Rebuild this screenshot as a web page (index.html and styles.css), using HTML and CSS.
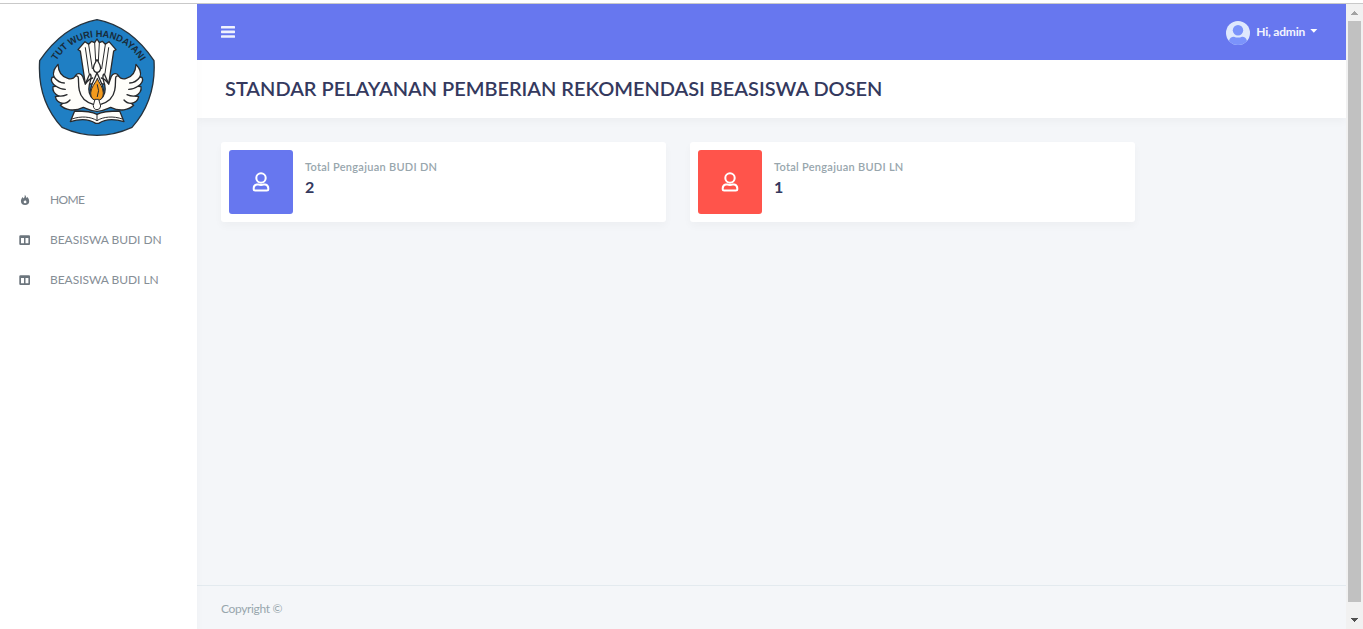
FILE: index.html
```html
<!DOCTYPE html>
<html lang="id">
<head>
<meta charset="utf-8">
<title>Dashboard</title>
<link rel="stylesheet" href="styles.css">
</head>
<body>
<div class="app">
  <aside class="sidebar">
    <svg class="logo" viewBox="0 0 402 402" role="img" aria-label="Tut Wuri Handayani">
      <path d="M201 29Q302 48 372 152Q379 270 306 352Q201 400 96 352Q21 270 29 152Q100 48 201 29Z" fill="#1f7fc4" stroke="#26323c" stroke-width="4"/>
      <defs><path id="motto" d="M79 152A147 147 0 0 1 334 158"/></defs>
      <text class="motto"><textPath href="#motto" textLength="304" lengthAdjust="spacingAndGlyphs">TUT WURI HANDAYANI</textPath></text>
      <g fill="#fffefa" stroke="#292a2c" stroke-width="4" stroke-linejoin="round" stroke-linecap="round">
        <path d="M166 222L151 123L144 119L165 95L176 103L185 94L194 98L201 87L208 98L217 94L226 103L237 95L258 119L251 123L236 222Z"/>
        <path d="M176 104L187 176M194 99L197 154M208 99L205 154M226 104L215 176M166 113L177 190M236 113L225 190" fill="none" stroke-width="3"/>
        <path d="M201 304C184 304 177 299 160 292C132 306 105 300 91 286L99 280C85 278 78 271 76 260L86 258C72 251 67 241 69 230L78 229C66 221 62 211 66 202L72 201C66 184 76 173 84 163C85 187 97 202 115 206C125 208 133 203 137 196C143 188 153 190 158 199L166 222L179 192C187 194 182 211 178 224Q172 252 190 267L201 272L212 267Q230 252 224 224C220 211 215 194 223 192L236 222L244 199C249 190 259 188 265 196C269 203 277 208 287 206C305 202 317 187 318 163C326 173 336 184 330 201L336 202C340 211 336 221 324 229L333 230C335 241 330 251 316 258L326 260C324 271 317 278 303 280L311 286C297 300 270 306 242 292C225 299 218 304 201 304Z"/>
        <path d="M72 201C81 213 91 219 103 219M78 229C86 235 96 238 106 238M86 258Q98 260 111 254M99 280Q112 280 120 270M330 201C321 213 311 219 299 219M324 229C316 235 306 238 296 238M316 258Q304 260 291 254M303 280Q290 280 282 270" fill="none"/>
        <path d="M137 198C151 194 142 217 148 241C152 262 170 277 190 283M265 198C251 194 260 217 254 241C250 262 232 277 212 283M166 222Q175 208 188 204M236 222Q227 208 214 204" fill="none"/>
        <path d="M201 149C195 159 190 165 190 175Q192 187 201 187Q210 187 212 175C212 165 207 159 201 149Z"/>
        <path d="M201 188L185 226L181 242L201 269L221 242L217 226Z"/>
        <path d="M202 206C196 220 183 231 182 249Q182 270 201 272Q220 270 220 249C219 231 208 220 202 206Z" fill="#f39a1d" stroke-width="3"/>
        <path d="M202 224Q210 242 202 260" fill="none" stroke-width="3"/>
        <path d="M196 268L206 268L212 288Q211 299 201 299Q191 299 190 288Z" stroke-width="3"/>
        <path d="M134 303L121 335C151 326 179 328 197 340L206 340C224 328 252 326 282 335L269 303C243 303 218 304 201 313C184 304 160 303 134 303Z"/>
        <path d="M126 327C153 317 183 320 201 332C219 320 250 317 277 327M201 313V332" fill="none" stroke-width="3"/>
      </g>
    </svg>
    <nav class="menu">
      <a class="item"><svg class="ico" viewBox="0 0 12 12"><path fill="#6c757d" fill-rule="evenodd" d="M5.7 .7C7 1.6 7.2 2.6 7 4C7.8 3.7 7.9 3.2 8 2.8C9.4 4.3 10.2 5.4 10.2 7.2Q10.1 11 6.1 11Q2 11 1.9 7.1C1.9 4.6 3.3 4.1 3.5 2.9Q4.3 3.5 4.5 4.4C5.6 3.4 6 2.3 5.7 .7ZM6.5 6.1C5.6 6.8 4.7 7.1 4.7 8Q4.8 9.3 6.1 9.3Q7.5 9.3 7.5 8Q7.4 7.4 7 7Q6.4 7.3 6.5 6.1Z"/></svg><span class="t-home">HOME</span></a>
      <a class="item"><svg class="ico" viewBox="0 0 12 12"><path fill="#6c757d" fill-rule="evenodd" d="M1.5 1.3H10Q11 1.3 11 2.3V10Q11 11 10 11H1.5Q.3 11 .3 10V2.3Q.3 1.3 1.5 1.3ZM2 4V9.3H5V4ZM6.5 4V9.3H9.4V4Z"/></svg><span>BEASISWA BUDI DN</span></a>
      <a class="item"><svg class="ico" viewBox="0 0 12 12"><path fill="#6c757d" fill-rule="evenodd" d="M1.5 1.3H10Q11 1.3 11 2.3V10Q11 11 10 11H1.5Q.3 11 .3 10V2.3Q.3 1.3 1.5 1.3ZM2 4V9.3H5V4ZM6.5 4V9.3H9.4V4Z"/></svg><span>BEASISWA BUDI LN</span></a>
    </nav>
  </aside>
  <div class="main">
    <header class="topbar">
      <svg class="burger" viewBox="0 0 14 12" fill="#f0f2fd"><rect y="0" width="14" height="2.6" rx=".6"/><rect y="4.6" width="14" height="2.6" rx=".6"/><rect y="9.2" width="14" height="2.6" rx=".6"/></svg>
      <div class="user">
        <svg class="avatar" viewBox="0 0 24 24"><defs><clipPath id="disc"><circle cx="12" cy="12" r="12"/></clipPath></defs><circle cx="12" cy="12" r="12" fill="#dfe8fd"/><g clip-path="url(#disc)" fill="#7b93fb"><circle cx="12" cy="9.3" r="5.2"/><path d="M3 24V20C3.6 16.4 6 15.5 8 15.7Q12 17.4 16 15.7C18 15.5 20.4 16.4 21 20V24Z"/></g></svg>
        <span class="hi">Hi, admin</span>
        <svg class="caret" viewBox="0 0 8 4"><path d="M.3 0H7.3L3.8 3.7Z" fill="#fff"/></svg>
      </div>
    </header>
    <div class="heading"><h1>STANDAR PELAYANAN PEMBERIAN REKOMENDASI BEASISWA DOSEN</h1></div>
    <section class="cards">
      <article class="card">
        <div class="tile"><svg viewBox="0 0 18 20" fill="none" stroke="#fff" stroke-width="2"><circle cx="9" cy="6" r="4.7"/><path d="M4.7 12.4H6Q9 13.8 12 12.4H13.3Q16.3 13 16.3 16.4V17Q16.3 18.5 14.8 18.5H3.2Q1.7 18.5 1.7 17V16.4Q1.7 13 4.7 12.4Z"/></svg></div>
        <div class="info"><h4>Total Pengajuan BUDI DN</h4><strong>2</strong></div>
      </article>
      <article class="card">
        <div class="tile red"><svg viewBox="0 0 18 20" fill="none" stroke="#fff" stroke-width="2"><circle cx="9" cy="6" r="4.7"/><path d="M4.7 12.4H6Q9 13.8 12 12.4H13.3Q16.3 13 16.3 16.4V17Q16.3 18.5 14.8 18.5H3.2Q1.7 18.5 1.7 17V16.4Q1.7 13 4.7 12.4Z"/></svg></div>
        <div class="info"><h4>Total Pengajuan BUDI LN</h4><strong>1</strong></div>
      </article>
    </section>
    <footer class="footer"><span>Copyright ©</span></footer>
  </div>
  <div class="scroll">
    <svg class="arrow" viewBox="0 0 17 17" shape-rendering="crispEdges"><path d="M5 11V10H6V9H7V8H8V7H9V8H10V9H11V10H12V11Z" fill="#a3a3a3"/></svg>
    <div class="thumb"></div>
    <svg class="arrow" viewBox="0 0 17 17" shape-rendering="crispEdges"><path d="M5 6V7H6V8H7V9H8V10H9V9H10V8H11V7H12V6Z" fill="#505050"/></svg>
  </div>
</div>
</body>
</html>
```
FILE: styles.css
```css
* { box-sizing: border-box; }
body { margin: 0; height: 629px; overflow: hidden; padding-top: 3px; background: #fff; font-family: Lato, "Open Sans", sans-serif; }
.app { display: flex; height: 626px; border-top: 1px solid #c9c9c9; }
.sidebar { width: 197px; background: #fff; box-shadow: 0 4px 8px rgba(0,0,0,.03); display: flex; flex-direction: column; z-index: 1; clip-path: inset(0 -12px 0 0); flex: none; }
.logo { width: 134px; height: 134px; margin: 6px 0 0 30px; }
.motto { font: bold 29px "Liberation Sans", sans-serif; fill: #182b3a; }
.menu { margin-top: 36px; }
.item { display: flex; align-items: center; height: 40px; padding-left: 19px; color: #868e96; font-size: 12px; letter-spacing: -.04px; white-space: nowrap; }
.item span { padding-bottom: 2px; }
.ico { width: 12px; height: 12px; margin-right: 19px; }
.item .t-home { letter-spacing: -.6px; }
.main { flex: 1; display: flex; flex-direction: column; background: #f4f6f9; min-width: 0; }
.topbar { z-index: 2; height: 56px; background: #6777ef; display: flex; align-items: center; justify-content: space-between; padding: 0 29px 0 24px; flex: none; }
.burger { width: 14px; height: 12px; }
.user { display: flex; align-items: center; color: #f3f4fe; }
.avatar { width: 24px; height: 24px; margin-top: 2px; }
.hi { font-size: 12px; font-weight: 700; margin-left: 6px; padding-bottom: 2px; letter-spacing: -.23px; }
.caret { width: 8px; height: 4px; margin: -3px -1px 0 5px; }
.heading { height: 58px; background: #fff; box-shadow: 0 4px 8px rgba(0,0,0,.03); display: flex; align-items: center; padding: 0 0 2px 28px; flex: none; }
h1 { margin: 0; font-size: 20px; line-height: 28px; font-weight: 600; color: #34395e; letter-spacing: -.025px; white-space: nowrap; }
.cards { display: flex; gap: 24px; padding: 24px 24px 0; flex: 1; align-items: flex-start; }
.card { width: 445px; height: 80px; padding: 8px; background: #fff; border-radius: 3px; box-shadow: 0 4px 8px rgba(0,0,0,.03); display: flex; }
.tile { width: 64px; height: 64px; border-radius: 3px; background: #6777ef; display: flex; align-items: center; justify-content: center; }
.tile svg { width: 18px; height: 20px; }
.red { background: #ff544b; }
.info { padding: 8px 0 0 12px; }
h4 { margin: 0; font-size: 11px; line-height: 17px; font-weight: 600; color: #98a6ad; letter-spacing: .28px; white-space: nowrap; }
.info strong { display: block; font-size: 16px; line-height: 24px; font-weight: 700; color: #34395e; }
.footer { height: 44px; border-top: 1px solid #e3eaef; padding: 2px 0 0 24px; display: flex; align-items: center; color: #98a6ad; font-size: 12px; letter-spacing: -.35px; flex: none; }
.scroll { width: 17px; background: #f1f1f1; display: flex; flex-direction: column; align-items: center; z-index: 3; flex: none; }
.arrow { width: 17px; height: 17px; flex: none; }
.thumb { width: 13px; height: 581px; background: #c1c1c1; margin-bottom: 10px; flex: none; }
```
